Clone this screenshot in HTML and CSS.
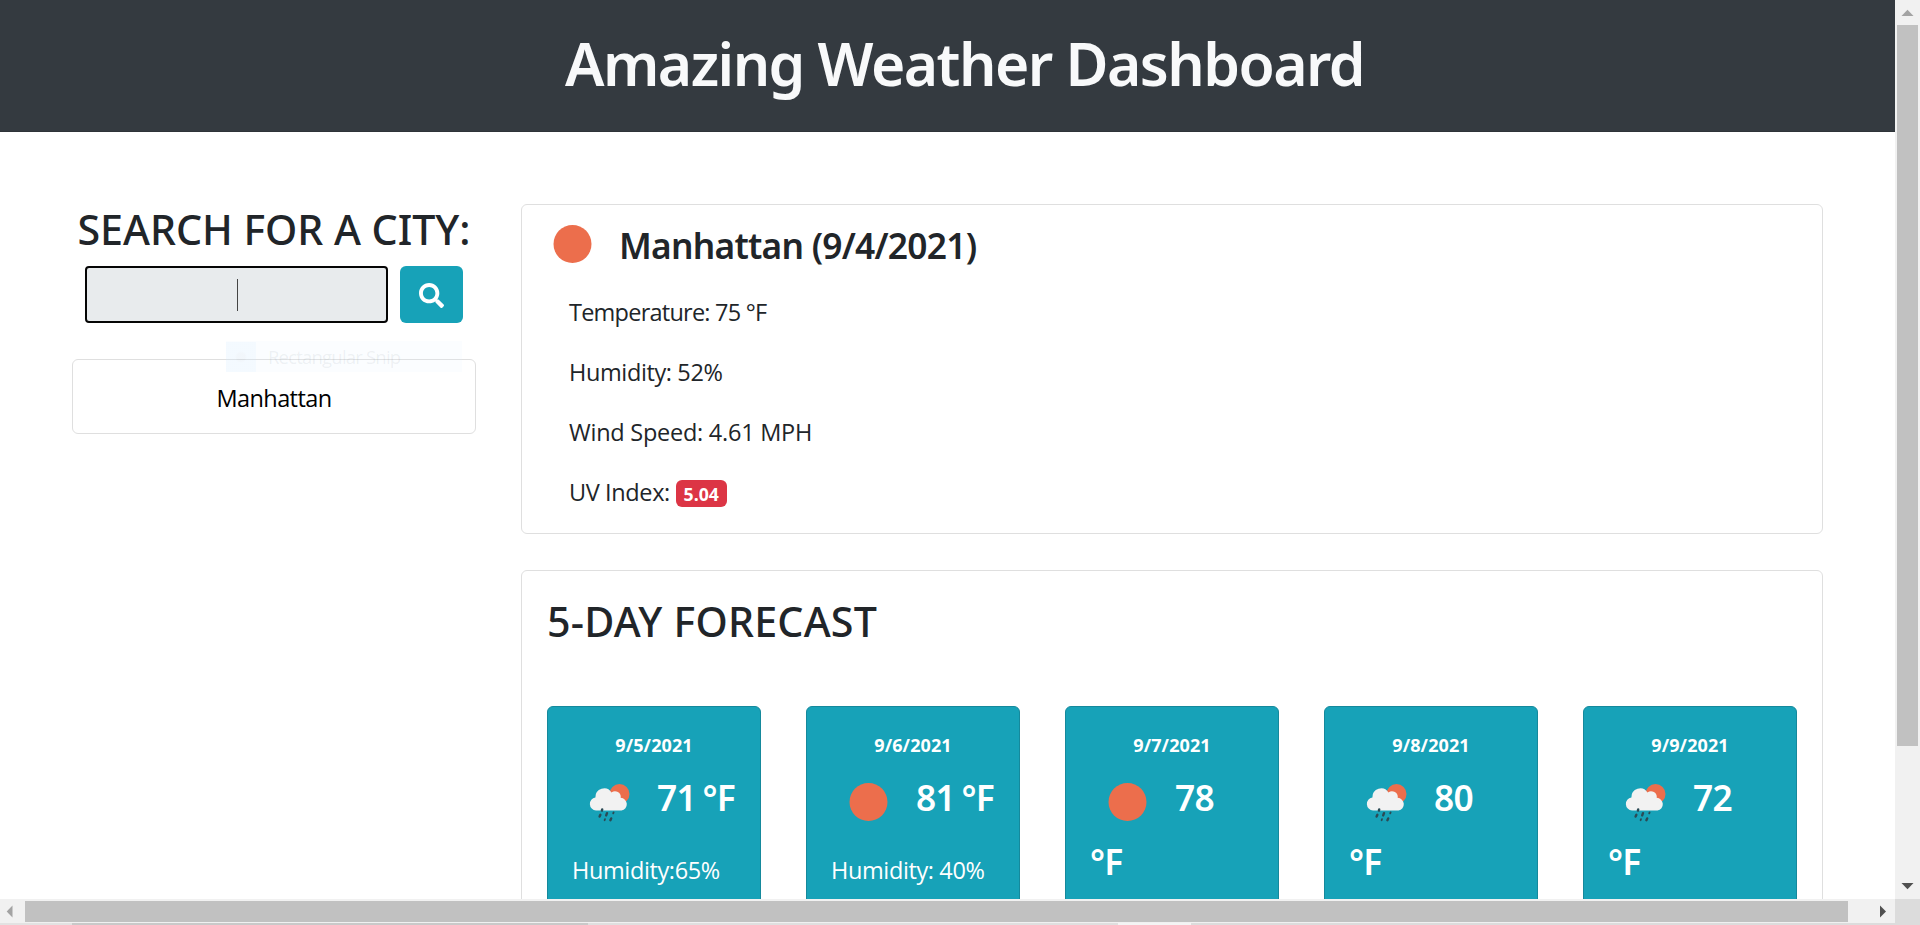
FILE: index.html
```
<!DOCTYPE html>
<html lang="en">
<head>
<meta charset="utf-8">
<title>Amazing Weather Dashboard</title>
<link rel="stylesheet" href="styles.css">
</head>
<body>
<svg class="defs" width="0" height="0" aria-hidden="true">
  <symbol id="sun" viewBox="0 0 75 64"><circle cx="37.5" cy="36" r="19" fill="#ec6e4c"/></symbol>
  <symbol id="rain" viewBox="0 0 75 64">
    <circle cx="47.500" cy="28" r="10" fill="#ec6e4c"/>
    <path d="M24 44.500a6.600 6.600 0 0 1-.6-13.1A8.700 8.700 0 0 1 39.500 26.500 5.700 5.700 0 0 1 48.700 31.800 6.400 6.400 0 0 1 49.500 44.500z" fill="#f2f2f2"/>
    <g stroke="#2b4a55" stroke-width="2.4" stroke-linecap="round">
      <path d="M30.2 43.4l-.3 1.2"/><path d="M28.4 48.8l-.8 1.8"/><path d="M35 47.2l-.8 2.2"/><path d="M41.6 46.4l-.4 1" stroke-width="1.8"/><path d="M33 53.2l-.4 1" stroke-width="1.8"/><path d="M39.2 52.4l-.8 1.8"/>
    </g>
  </symbol>
</svg>
<div class="window">
  <div class="viewport">
    <header class="header"><h1>Amazing Weather Dashboard</h1></header>
    <main class="main">
      <aside class="side">
        <h2 class="search-title">SEARCH FOR A CITY:</h2>
        <div class="search">
          <div class="field"><span class="caret"></span></div>
          <button class="go" aria-label="Search"><svg width="25" height="25" viewBox="0 0 512 512"><path fill="#fff" d="M505 442.7L405.3 343c-4.5-4.500-10.600-7-17-7H372c27.600-35.300 44-79.700 44-128C416 93.100 322.900 0 208 0S0 93.100 0 208s93.100 208 208 208c48.300 0 92.700-16.400 128-44v16.300c0 6.400 2.500 12.500 7 17l99.700 99.700c9.400 9.400 24.600 9.400 33.900 0l28.300-28.300c9.400-9.400 9.400-24.600.1-34zM208 336c-70.700 0-128-57.200-128-128 0-70.700 57.200-128 128-128 70.700 0 128 57.200 128 128 0 70.700-57.200 128-128 128z"/></svg></button>
        </div>
        <div class="history">Manhattan
          <div class="ghost"><span class="ghost-icon"></span>Rectangular Snip</div>
        </div>
      </aside>
      <div class="content">
        <section class="card today">
          <div class="today-head"><svg width="75" height="64"><use href="#sun"/></svg><h3>Manhattan (9/4/2021)</h3></div>
          <p class="temp">Temperature: 75 °F</p>
          <p>Humidity: 52%</p>
          <p class="wind">Wind Speed: 4.61 MPH</p>
          <p>UV Index: <span class="badge">5.04</span></p>
        </section>
        <section class="card forecast">
          <h2>5-DAY FORECAST</h2>
          <div class="days">
            <article class="day"><h4>9/5/2021</h4><div class="reading"><svg width="75" height="64"><use href="#rain"/></svg><span>71 °F</span></div><p class="hum">Humidity:65%</p></article>
            <article class="day"><h4>9/6/2021</h4><div class="reading"><svg width="75" height="64"><use href="#sun"/></svg><span>81 °F</span></div><p class="hum">Humidity: 40%</p></article>
            <article class="day"><h4>9/7/2021</h4><div class="reading"><svg width="75" height="64"><use href="#sun"/></svg><span>78</span></div><div class="reading unit">°F</div></article>
            <article class="day"><h4>9/8/2021</h4><div class="reading"><svg width="75" height="64"><use href="#rain"/></svg><span>80</span></div><div class="reading unit">°F</div></article>
            <article class="day"><h4>9/9/2021</h4><div class="reading"><svg width="75" height="64"><use href="#rain"/></svg><span>72</span></div><div class="reading unit">°F</div></article>
          </div>
        </section>
      </div>
    </main>
  </div>
  <div class="vbar">
    <svg width="25" height="25"><path d="M6.500 16h12L12.500 9.800z" fill="#a3a3a3"/></svg>
    <div class="vthumb"></div>
    <svg width="25" height="25"><path d="M6.500 9h12L12.500 15.200z" fill="#505050"/></svg>
  </div>
  <div class="hbar">
    <svg width="20" height="24"><path d="M12.500 6.500v12L6.700 12.500z" fill="#a3a3a3"/></svg>
    <div class="hthumb"></div>
    <svg width="25" height="24"><path d="M10 6.500v12L16 12.500z" fill="#505050"/></svg>
  </div>
  <div class="corner"></div>
  <div class="strip"><i class="s1"></i><i class="s2"></i><i class="s3"></i><i class="s4"></i></div>
</div>
</body>
</html>
```
FILE: styles.css
```
* { box-sizing: border-box; margin: 0; padding: 0; }
body { width: 1920px; height: 925px; overflow: hidden; background: #fff; color: #212529; font: 23.5px/36px "Open Sans", "Noto Sans", sans-serif; letter-spacing: -0.38px; }
h1, h2, h3, .reading { font-family: "Noto Sans", "Open Sans", sans-serif; font-weight: 600; }
.defs { position: absolute; }
.window { display: grid; grid-template-columns: 1895px 25px; grid-template-rows: 899px 24px 2px; }
.viewport { overflow: hidden; height: 899px; }

.header { height: 132px; padding: 27px 0 0 34px; background: #343a40; border-bottom: 1px solid #2e3338; text-align: center; }
.header h1 { font-size: 58.8px; line-height: 72px; letter-spacing: -1.55px; color: #f8f9fa; }

.main { display: flex; gap: 45px; padding: 72px 72px 0; }
.side { width: 404px; }
h2 { font-size: 41.2px; font-weight: 500; line-height: 50px; }
.search-title { letter-spacing: -0.05px; text-align: center; white-space: nowrap; }
.search { display: flex; justify-content: center; gap: 12px; padding-top: 12px; }
.field { display: flex; align-items: center; justify-content: center; width: 303px; height: 57px; padding-left: 2px; background: #e8ebed; border: 2px solid #050505; border-radius: 4px; }
.caret { width: 1px; height: 32px; background: #444; }
.go { display: flex; align-items: center; justify-content: center; width: 63px; height: 57px; border: 0; border-radius: 6px; background: #17a2b8; }
.go svg { margin-top: 2px; }
.history { position: relative; height: 75px; margin-top: 36px; padding-top: 20px; border: 1px solid #dfdfdf; border-radius: 6px; text-align: center; color: #000; letter-spacing: -0.6px; }
.ghost { position: absolute; left: 153px; top: -19px; width: 236px; height: 31px; display: flex; align-items: center; gap: 12px; background: rgba(225, 240, 255, .15); color: rgba(120, 130, 145, .11); font-size: 18.5px; letter-spacing: -0.8px; white-space: nowrap; }
.ghost-icon { width: 30px; height: 30px; background: radial-gradient(circle, rgba(120, 160, 200, .07) 4px, rgba(200, 230, 255, .14) 6px); }

.content { width: 1302px; }
.card { border: 1px solid #dfdfdf; border-radius: 6px; background: #fff; }
.today { height: 330px; padding: 9px 0 0 13px; }
.today-head { display: flex; align-items: flex-start; height: 80px; }
.today-head svg { margin-top: -6px; }
.today-head h3 { margin-left: 9px; font-size: 35.3px; line-height: 62px; letter-spacing: -0.75px; }
.today p { margin: 0 0 24px 34px; }
.today .temp { letter-spacing: -0.76px; }
.today .wind { letter-spacing: -0.25px; }
.badge { display: inline-block; height: 27px; padding: 0 8px; border-radius: 6px; background: #dc3545; color: #fff; font-size: 17.6px; font-weight: 700; line-height: 28px; letter-spacing: 0; }

.forecast { height: 460px; margin-top: 36px; padding: 25px 25px 0; }
.forecast h2 { letter-spacing: 0.2px; }
.days { display: flex; gap: 45px; margin-top: 60px; }
.day { width: 214px; height: 320px; padding: 25px 24px 0; border: 1px solid #15899c; border-radius: 6px; background: #17a2b8; color: #fff; white-space: nowrap; }
.day h4 { font-size: 18px; font-weight: 700; line-height: 27px; text-align: center; letter-spacing: 0.1px; margin-bottom: 7px; }
.reading { display: flex; height: 64px; font-size: 35.3px; line-height: 63px; letter-spacing: -0.7px; word-spacing: -2px; }
.reading svg { flex: none; }
.reading span { margin-left: 10px; }
.hum { margin-top: 22px; }

.vbar { display: flex; flex-direction: column; background: #f1f1f1; grid-column: 2; grid-row: 1; height: 899px; }
.vthumb { width: 21px; height: 721px; margin: 0 2px 128px; background: #c1c1c1; }
.hbar { display: flex; background: #f1f1f1; height: 24px; }
.hthumb { width: 1823px; height: 21px; margin: 2px 22px 0 5px; background: #c1c1c1; }
.corner { background: #dcdcdc; }
.strip { grid-column: 1 / 3; display: flex; height: 2px; background: #dcdcdc; }
.s1 { width: 72px; background: #e2e2e2; }
.s2 { width: 516px; background: #c9c9c9; }
.s3 { width: 530px; background: #dfdfdf; }
.s4 { width: 73px; background: #f4f4f4; }
```
